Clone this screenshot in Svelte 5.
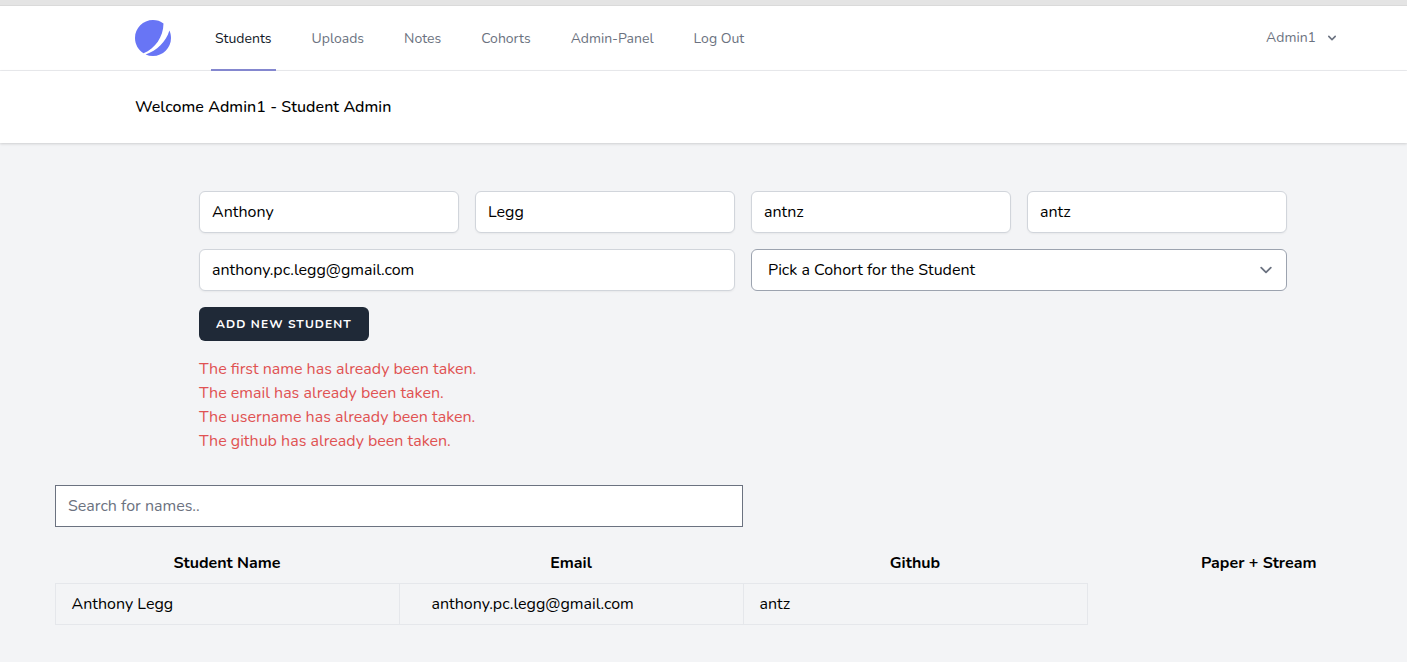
<script>
  const links = [
    { label: 'Students', active: true },
    { label: 'Uploads' },
    { label: 'Notes' },
    { label: 'Cohorts' },
    { label: 'Admin-Panel' },
    { label: 'Log Out' }
  ];
  const names = ['Anthony', 'Legg', 'antnz', 'antz'];
  const errors = ['first name', 'email', 'username', 'github'];
  const columns = ['Student Name', 'Email', 'Github', 'Paper + Stream'];
  const students = [{ name: 'Anthony Legg', email: 'anthony.pc.legg@gmail.com', github: 'antz' }];
</script>

<div class="page">
  <div class="strip"></div>
  <nav>
    <svg class="logo" viewBox="0 0 48 48" fill="#6875f5">
      <path d="M11.395 44.428C4.557 40.198 0 32.632 0 24 0 10.745 10.745 0 24 0a23.891 23.891 0 0113.997 4.502c-.2 17.907-11.097 33.245-26.602 39.926z" />
      <path d="M14.134 45.885A23.914 23.914 0 0024 48c13.255 0 24-10.745 24-24 0-3.516-.756-6.856-2.115-9.866-4.659 15.143-16.608 27.092-31.75 31.751z" />
    </svg>
    <div class="links">
      {#each links as link}
        <a href="#top" class:active={link.active}>{link.label}</a>
      {/each}
    </div>
    <button class="user">
      <span>Admin1</span>
      <svg width="16" height="16" viewBox="0 0 20 20" fill="currentColor"><path fill-rule="evenodd" clip-rule="evenodd" d="M5.293 7.293a1 1 0 011.414 0L10 10.586l3.293-3.293a1 1 0 111.414 1.414l-4 4a1 1 0 01-1.414 0l-4-4a1 1 0 010-1.414z" /></svg>
    </button>
  </nav>
  <header>Welcome Admin1 - Student Admin</header>

  <main>
    <div class="form">
      {#each names as value}
        <input type="text" {value} />
      {/each}
      <input class="wide" type="text" value="anthony.pc.legg@gmail.com" />
      <div class="select wide">
        <span>Pick a Cohort for the Student</span>
        <svg width="24" height="24" viewBox="0 0 20 20" fill="none" stroke="#6b7280" stroke-width="1.5" stroke-linecap="round" stroke-linejoin="round"><path d="M6 8l4 4 4-4" /></svg>
      </div>
      <button class="add">Add New Student</button>
    </div>
    <div class="errors">
      {#each errors as field}
        <div>The {field} has already been taken.</div>
      {/each}
    </div>

    <input class="search" type="text" placeholder="Search for names.." />
    <table>
      <thead>
        <tr>{#each columns as column}<th>{column}</th>{/each}</tr>
      </thead>
      <tbody>
        {#each students as student}
          <tr>
            <td>{student.name}</td>
            <td class="email">{student.email}</td>
            <td>{student.github}</td>
          </tr>
        {/each}
      </tbody>
    </table>
  </main>
</div>

<style>
  :global(body) { margin: 0; overflow: hidden; }
  .page {
    box-sizing: border-box;
    height: 662px;
    overflow: hidden;
    background: #f3f4f6;
    color: #000;
    font: 16px/24px Nunito, Lato, sans-serif;
  }
  .page * { box-sizing: border-box; }
  .strip { height: 6px; background: #e4e4e4; border-bottom: 1px solid #dadada; }
  nav {
    display: flex;
    align-items: center;
    height: 65px;
    padding: 0 67px 0 135px;
    background: #fff;
    border-bottom: 1px solid #ebecef;
  }
  .logo { width: 36px; height: 36px; }
  .links { display: flex; gap: 32px; margin-left: 40px; align-self: stretch; margin-bottom: -1px; }
  a {
    display: flex;
    align-items: center;
    padding: 2px 4px 0;
    border-bottom: 2px solid transparent;
    color: #6b7280;
    font-size: 14px;
    text-decoration: none;
  }
  a.active { color: #111827; border-color: #8487cf; }
  button { font: inherit; border: 0; padding: 0; }
  .user {
    display: flex;
    align-items: center;
    gap: 8px;
    margin-left: auto;
    background: none;
    color: #6b7280;
    font-size: 14px;
    line-height: 20px;
  }
  header {
    height: 72px;
    padding: 24px 135px;
    background: #fff;
    box-shadow: 0 1px 3px rgba(0, 0, 0, 0.1), 0 1px 2px rgba(0, 0, 0, 0.06);
    font-weight: 500;
    letter-spacing: 0.06px;
  }
  main { padding: 48px 0 0 55px; }
  .form {
    display: grid;
    grid-template-columns: repeat(4, 260px);
    gap: 16px;
    margin-left: 144px;
  }
  input {
    display: block;
    width: 100%;
    height: 42px;
    padding: 8px 12px;
    background: #fff;
    border: 1px solid #d1d5db;
    border-radius: 6px;
    box-shadow: 0 1px 2px rgba(0, 0, 0, 0.05);
    color: #000;
    font: inherit;
  }
  .wide { grid-column: span 2; }
  .select {
    display: flex;
    align-items: center;
    justify-content: space-between;
    height: 42px;
    padding: 0 8px 0 16px;
    background: #fff;
    border: 1px solid #9ca3af;
    border-radius: 6px;
  }
  .add {
    width: 170px;
    height: 34px;
    background: #1f2937;
    border-radius: 6px;
    color: #fff;
    font-size: 12px;
    font-weight: 700;
    line-height: 16px;
    letter-spacing: 1.08px;
    text-transform: uppercase;
  }
  .errors { margin: 16px 0 0 144px; color: #e05252; }
  .search {
    width: 688px;
    margin-top: 32px;
    border-color: #6b7280;
    border-radius: 0;
    box-shadow: none;
  }
  .search::placeholder { color: #6b7280; opacity: 1; }
  table {
    width: 1377px;
    margin-top: 16px;
    table-layout: fixed;
    border-collapse: collapse;
  }
  th { height: 40px; padding: 8px 16px 8px 15px; font-weight: 700; text-align: center; }
  td { height: 41px; padding: 8px 16px 8px 15.5px; border: 1px solid #e5e7eb; }
  td.email { padding-left: 31.5px; }
</style>
